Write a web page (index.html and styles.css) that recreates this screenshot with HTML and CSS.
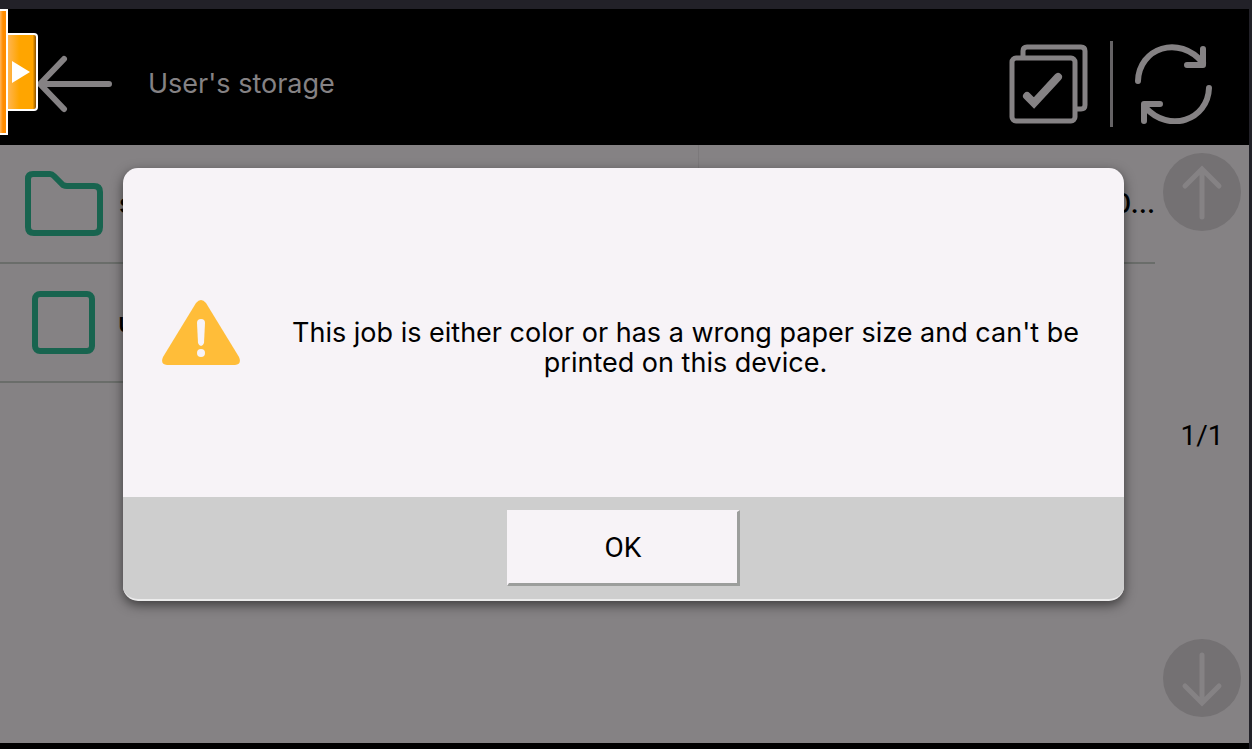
FILE: index.html
```html
<!DOCTYPE html>
<html lang="en">
<head>
  <meta charset="UTF-8" />
  <title>User's storage</title>
  <meta name="viewport" content="width=device-width, initial-scale=1.0" />
  <link rel="stylesheet" href="styles.css">
</head>
<body>

  <div class="screen">
    <header class="topbar">
      <button class="icon-btn back" aria-label="Back">
        <svg width="78" height="60" viewBox="0 0 78 60">
          <path d="M73 30H5M28 5L4 30L28 55" />
        </svg>
      </button>
      <h1>User's storage</h1>
      <button class="icon-btn" aria-label="Select all">
        <svg class="thin" width="80" height="80" viewBox="0 0 80 80">
          <path d="M14 13V7Q14 3 18 3H72Q76 3 76 7V61Q76 65 72 65H67" />
          <rect x="3" y="14" width="63" height="63" rx="4" />
          <path class="check" d="M18 52L25 59L49 33" />
        </svg>
      </button>
      <span class="divider"></span>
      <button class="icon-btn" aria-label="Refresh">
        <svg width="80" height="80" viewBox="0 0 80 80">
          <path d="M4 37C5 4 45 -10 69 19M69 5V21H53" />
          <path d="M75 44C74 76 35 90 11 63M10 77V60H26" />
        </svg>
      </button>
    </header>

    <main class="content">
      <ul class="files">
        <li class="file">
          <svg class="file-icon" width="80" height="68" viewBox="0 0 80 68">
            <path d="M9 4H26Q28 4 30 6L39 15Q41 16 43 16H70Q76 16 76 22V57Q76 63 70 63H10Q4 63 4 57V9Q4 4 9 4Z" />
          </svg>
          <span>s</span>
        </li>
        <li class="file file-right">
          <span>0…</span>
        </li>
        <li class="file">
          <input type="checkbox" id="file2" />
          <label for="file2">u</label>
        </li>
      </ul>

      <nav class="pager">
        <button class="page-btn" aria-label="Previous page">
          <svg width="78" height="78" viewBox="0 0 78 78">
            <path d="M39 64V17M22 33L39 16L56 33" />
          </svg>
        </button>
        <span class="page-count">1/1</span>
        <button class="page-btn" aria-label="Next page">
          <svg width="78" height="78" viewBox="0 0 78 78">
            <path d="M39 16V63M22 47L39 64L56 47" />
          </svg>
        </button>
      </nav>
    </main>

    <div class="side-tab">
      <div class="side-edge"></div>
      <button class="side-handle" aria-label="Open panel">
        <svg width="18" height="22" viewBox="0 0 18 22">
          <path d="M0 0L18 11L0 22Z" />
        </svg>
      </button>
    </div>

    <div class="overlay">
      <div class="dialog" role="alertdialog" aria-describedby="message">
        <div class="dialog-body">
          <svg class="warning" width="80" height="68" viewBox="0 0 80 68">
            <path class="triangle" d="M35 4Q40 -2 45 4L78 58Q81 65 74 66H6Q-1 65 2 58Z" />
            <path class="mark" d="M36 24Q36 20 40 20Q44 20 44 24L43 44Q42 47 40 47Q38 47 37 44Z" />
            <circle class="mark" cx="40" cy="54" r="4" />
          </svg>
          <p id="message">This job is either color or has a wrong paper size and can't be printed on this device.</p>
        </div>
        <div class="dialog-footer">
          <button class="ok">OK</button>
        </div>
      </div>
    </div>
  </div>

</body>
</html>
```
FILE: styles.css
```css
* {
  box-sizing: border-box;
}

body {
  margin: 0;
  padding: 9px 3px 0 0;
  height: 100vh;
  background-color: #222128;
  font-family: Inter, Arial, sans-serif;
  font-size: 27px;
  color: #000;
}

button {
  padding: 0;
  border: none;
  background: none;
  font: inherit;
  cursor: pointer;
}

svg {
  display: block;
}

.screen {
  position: relative;
  display: flex;
  flex-direction: column;
  height: 100%;
  padding-bottom: 6px;
  background-color: #000;
}

/* top bar */
.topbar {
  display: flex;
  align-items: center;
  height: 136px;
  padding: 14px 35px 0 36px;
}

.topbar h1 {
  flex: 1;
  margin: 0 0 2px 34px;
  font-size: 27px;
  font-weight: normal;
  color: #858284;
}

.icon-btn svg {
  fill: none;
  stroke: #858284;
  stroke-width: 6;
  stroke-linecap: round;
  stroke-linejoin: round;
}

.icon-btn .thin {
  stroke-width: 5;
  stroke-linecap: butt;
}

.icon-btn .check {
  stroke-width: 8;
  stroke-linecap: round;
  stroke-linejoin: miter;
}

.divider {
  width: 3px;
  height: 86px;
  margin: 0 21px;
  background-color: #656365;
}

/* file list */
.content {
  flex: 1;
  display: flex;
  background-color: #858284;
}

.files {
  flex: 1;
  display: grid;
  grid-template-columns: 61fr 40fr;
  grid-auto-rows: 119px;
  margin: 0;
  padding: 0;
  list-style: none;
  font-weight: 500;
}

.file {
  display: flex;
  align-items: center;
  gap: 15px;
  padding-left: 24px;
  border-bottom: 2px solid #6a6d6a;
}

.file-right {
  justify-content: flex-end;
  border-left: 1px solid #7c797b;
}

.file-icon {
  fill: none;
  stroke: #18644f;
  stroke-width: 6;
}

.file input {
  appearance: none;
  width: 63px;
  height: 63px;
  margin: 0 8px;
  border: 6px solid #18644f;
  border-radius: 8px;
}

.pager {
  display: flex;
  flex-direction: column;
  justify-content: space-between;
  align-items: center;
  width: 94px;
  padding: 8px 0 26px;
}

.page-btn {
  border-radius: 50%;
  background-color: #747173;
}

.page-btn svg {
  fill: none;
  stroke: #858284;
  stroke-width: 5;
  stroke-linecap: round;
}

.page-count {
  font-family: Roboto, sans-serif;
  font-size: 28px;
}

/* pull-out tab on the left edge */
.side-tab {
  position: absolute;
  top: 0;
  left: 0;
  display: flex;
  align-items: center;
}

.side-edge {
  width: 8px;
  height: 126px;
  border: 2px solid #fff;
  border-left: none;
  background: linear-gradient(to right, #ffb45a, #ff8c00 50%);
}

.side-handle {
  display: flex;
  align-items: center;
  width: 30px;
  height: 78px;
  padding-left: 4px;
  border: 2px solid #fff;
  border-left: none;
  border-radius: 0 4px 4px 0;
  background: linear-gradient(to right, #ffb550, #ffa500 40%, #ffa500 88%, #8a5000);
}

.side-handle svg {
  fill: #fff;
}

/* message dialog */
.overlay {
  position: absolute;
  inset: 0;
  padding: 159px 125px 0 123px;
}

.dialog {
  border-bottom: 2px solid #ececec;
  border-radius: 15px;
  overflow: hidden;
  background-color: #f7f3f7;
  box-shadow: 0 4px 12px rgba(0, 0, 0, 0.55);
}

.dialog-body {
  display: flex;
  align-items: center;
  gap: 40px;
  min-height: 329px;
  padding: 0 34px 0 38px;
}

.warning {
  flex: none;
}

.triangle {
  fill: #ffbd39;
}

.mark {
  fill: #f7f3f7;
}

.dialog-body p {
  flex: 1;
  margin: 30px 0 0;
  line-height: 30px;
  text-align: center;
}

.dialog-footer {
  display: flex;
  justify-content: center;
  padding: 13px 0;
  background-color: #cecece;
}

.ok {
  width: 233px;
  height: 76px;
  border-style: solid;
  border-width: 2px 3px 3px 2px;
  border-color: #f7f3f7 #9c9e9c #9c9e9c #f7f3f7;
  background-color: #f7f3f7;
  font-family: Roboto, sans-serif;
  font-size: 28px;
}
```
